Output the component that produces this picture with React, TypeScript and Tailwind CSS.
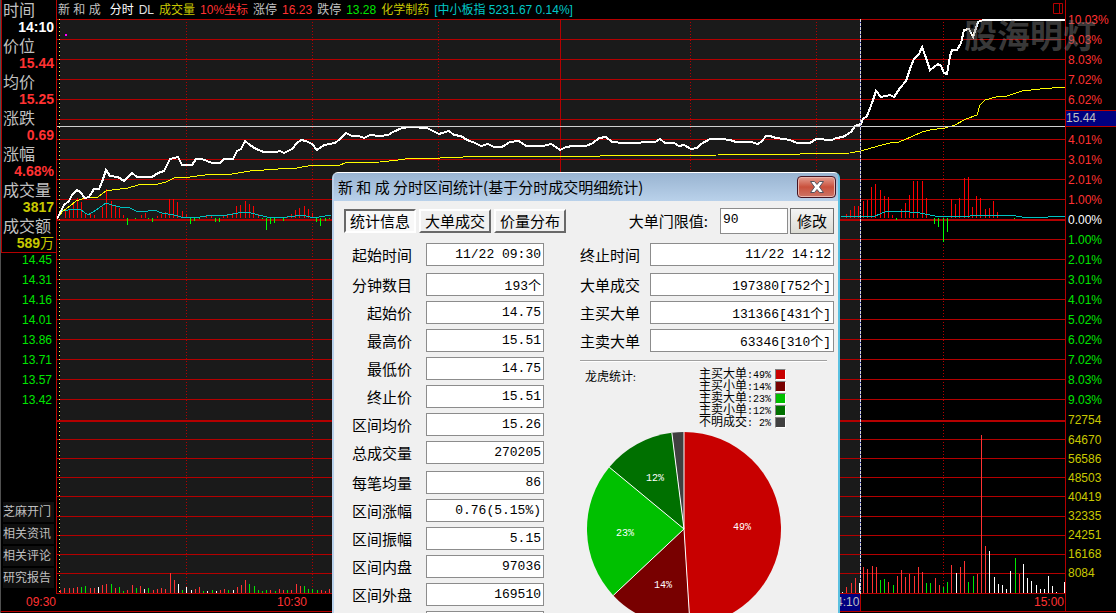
import React from 'react';

type BarColor = 'r' | 'g' | 'w';
type VolumeBar = [number, number, BarColor];

const BAR_FILL = { r: '#ff3232', g: '#00e600', w: '#ffffff' };

const HEADER_ITEMS = [
  { text: '新 和 成', className: 'text-[#c0c0c0] mr-1' },
  { text: '分时', className: 'text-white' },
  { text: 'DL', className: 'text-[#e0e0e0]' },
  { text: '成交量', className: 'text-[#c8c800]' },
  { text: '10%坐标', className: 'text-[#ff3232]' },
  { text: '涨停', className: 'text-[#c0c0c0]' },
  { text: '16.23', className: 'text-[#ff3232]' },
  { text: '跌停', className: 'text-[#c0c0c0]' },
  { text: '13.28', className: 'text-[#00e600]' },
  { text: '化学制药', className: 'text-[#c8c800]' },
  { text: '[中小板指 5231.67 0.14%]', className: 'text-[#00c8c8]' },
];

const QUOTES = [
  { label: '时间', value: '14:10', className: 'text-white' },
  { label: '价位', value: '15.44', className: 'text-[#ff3232]' },
  { label: '均价', value: '15.25', className: 'text-[#ff3232]' },
  { label: '涨跌', value: '0.69', className: 'text-[#ff3232]' },
  { label: '涨幅', value: '4.68%', className: 'text-[#ff3232]' },
  { label: '成交量', value: '3817', className: 'text-[#c8c800]' },
  { label: '成交额', value: '589', unit: '万', className: 'text-[#c8c800]' },
];

const LOW_PRICES = ['14.45', '14.31', '14.16', '14.01', '13.86', '13.71', '13.57', '13.42'];
const SIDE_BUTTONS = ['芝麻开门', '相关资讯', '相关评论', '研究报告'];

const UP_PERCENTS = ['10.03%', '9.03%', '8.03%', '7.02%', '6.02%', '', '4.01%', '3.01%', '2.01%', '1.00%'];
const DOWN_PERCENTS = ['1.00%', '2.01%', '3.01%', '4.01%', '5.02%', '6.02%', '7.02%', '8.03%', '9.03%'];
const VOLUMES = ['64670', '56586', '48503', '40419', '32335', '24251', '16168', '8084'];

const PRICE_GRID = [19, 39, 59, 79, 99, 119, 139, 159, 179, 199, 239, 259, 279, 299, 319, 339, 359, 379, 399];
const VOLUME_GRID = [439, 458, 477, 496, 516, 535, 554, 573, 593];
const TIME_GRID = [186, 312, 438, 690, 816, 943];

const PRICE_LINE =
  '57,219 60,213 64,205 69,201 72,195 77,190 80,192 85,198 89,197 94,189 99,189 102,182 106,170 110,176 118,177 124,181 132,173 137,177 152,177 158,173 164,171 170,159 178,157 182,165 192,165 196,159 202,159 212,163 220,163 224,159 233,159 237,151 241,149 245,141 250,145 256,149 264,152 276,152 280,151 284,153 292,149 297,143 301,140 306,141 312,144 317,150 324,145 335,143 340,139 346,133 352,136 359,136 364,138 370,135 380,136 388,135 393,132 402,128 410,127 427,128 439,134 449,131 454,135 461,136 467,140 475,143 481,146 488,144 494,147 502,147 510,142 519,141 526,146 543,146 551,144 556,147 560,150 566,147 573,146 586,146 593,143 599,138 606,137 612,142 624,143 635,143 648,142 655,142 660,139 665,143 674,143 679,146 684,145 691,149 697,148 701,144 710,139 722,139 730,140 736,142 751,142 758,144 762,141 766,136 770,136 776,138 784,139 790,140 797,143 810,143 816,139 832,140 836,138 843,137 851,132 855,126 861,124 863,119 867,116 872,103 876,91 881,97 890,95 894,97 900,88 906,81 911,66 914,59 919,54 922,47 926,58 930,70 934,67 938,64 941,66 944,73 947,74 950,56 952,50 957,50 961,43 964,30 969,29 973,37 978,22 983,20 1065,20';
const AVERAGE_LINE =
  '57,219 62,212 70,206 76,201 85,198 98,197 106,191 112,190 128,188 138,185 158,184 166,182 174,178 190,177 205,175 232,174 250,171 278,169 297,168 308,166 340,165 345,163 380,162 398,160 412,158 440,158 487,156 600,156 718,155 730,154 800,154 850,153 861,151 878,146 890,143 899,142 911,137 922,132 930,130 945,128 955,125 966,119 977,115 980,105 985,100 996,97 1007,96 1022,91 1040,89 1065,87';
const TREND_LEFT =
  '60,211 68,210 80,209 88,215 96,210 106,203 112,205 120,207 130,208 138,212 148,211 154,210 162,213 174,215 185,218 200,217 212,215 222,216 238,213 248,212 258,215 272,218 287,217 303,215 313,218 331,215';
const TREND_RIGHT =
  '841,217 860,216 875,216 880,214 887,211 900,211 920,213 935,216 965,217 975,215 1010,215 1022,217 1048,217 1065,216';

const STRENGTH_UP: [number, number][] = [
  [65, 211], [69, 210], [73, 202], [77, 198], [81, 202], [85, 213], [90, 214], [94, 215], [102, 207], [106, 189],
  [111, 201], [115, 205], [119, 208], [123, 215], [141, 215], [145, 213], [157, 216], [161, 214], [165, 212],
  [169, 199], [173, 199], [177, 202], [182, 211], [186, 214], [206, 216], [211, 215], [223, 216], [227, 215],
  [232, 213], [236, 206], [240, 205], [245, 201], [249, 204], [253, 206], [258, 214], [287, 216], [291, 214],
  [295, 210], [299, 208], [304, 206], [308, 209], [312, 213], [846, 214], [850, 210], [854, 206], [858, 206],
  [863, 201], [867, 200], [871, 187], [875, 184], [880, 190], [884, 196], [888, 197], [892, 215], [901, 209],
  [905, 203], [909, 195], [913, 181], [917, 181], [922, 181], [926, 198], [951, 199], [955, 204], [959, 198],
  [964, 178], [968, 177], [972, 207], [976, 196], [980, 198], [985, 209], [989, 208], [993, 201], [997, 212],
];
const STRENGTH_DOWN: [number, number][] = [
  [127, 225], [135, 219], [148, 219], [152, 222], [190, 224], [194, 221], [199, 219], [215, 222], [219, 222],
  [262, 219], [266, 230], [270, 224], [274, 223], [283, 221], [316, 222], [320, 226], [325, 221], [329, 219],
  [896, 220], [934, 224], [938, 227], [943, 242], [947, 232], [1014, 219],
];

const VOLUME_BARS: VolumeBar[] = [
  [60, 590, 'r'], [64, 588, 'r'], [69, 588, 'r'], [73, 588, 'r'], [77, 587, 'r'], [81, 587, 'g'], [85, 586, 'g'],
  [90, 588, 'r'], [94, 588, 'r'], [98, 587, 'w'], [102, 585, 'r'], [106, 584, 'r'], [111, 584, 'g'], [115, 588, 'r'],
  [119, 587, 'g'], [123, 591, 'g'], [127, 590, 'r'], [132, 585, 'r'], [136, 588, 'g'], [140, 586, 'r'],
  [144, 589, 'w'], [148, 588, 'g'], [153, 590, 'r'], [157, 589, 'r'], [161, 588, 'r'], [165, 589, 'r'],
  [170, 573, 'r'], [174, 580, 'r'], [178, 584, 'w'], [182, 590, 'g'], [186, 587, 'w'], [191, 590, 'w'],
  [195, 589, 'r'], [199, 587, 'r'], [203, 591, 'g'], [207, 591, 'w'], [212, 590, 'g'], [216, 591, 'w'],
  [220, 590, 'r'], [224, 589, 'r'], [228, 590, 'g'], [233, 590, 'w'], [237, 587, 'r'], [241, 585, 'r'],
  [245, 580, 'r'], [249, 584, 'g'], [254, 586, 'g'], [258, 590, 'g'], [262, 591, 'g'], [266, 590, 'g'],
  [270, 590, 'r'], [275, 591, 'g'], [279, 589, 'r'], [283, 590, 'r'], [287, 590, 'g'], [291, 590, 'r'],
  [296, 584, 'r'], [300, 586, 'r'], [304, 586, 'g'], [308, 589, 'g'], [312, 589, 'g'], [317, 590, 'g'],
  [321, 590, 'r'], [325, 591, 'r'], [329, 589, 'r'], [842, 592, 'w'], [846, 587, 'r'], [851, 583, 'r'],
  [855, 578, 'r'], [859, 583, 'w'], [863, 567, 'r'], [867, 569, 'r'], [872, 566, 'r'], [876, 567, 'r'],
  [880, 580, 'g'], [884, 579, 'g'], [888, 582, 'r'], [893, 585, 'g'], [897, 576, 'r'], [901, 570, 'r'],
  [905, 577, 'r'], [909, 574, 'r'], [914, 576, 'r'], [918, 567, 'r'], [922, 572, 'r'], [926, 583, 'g'],
  [930, 583, 'g'], [935, 578, 'r'], [939, 585, 'r'], [943, 587, 'g'], [947, 582, 'g'], [951, 565, 'r'],
  [956, 573, 'w'], [960, 567, 'r'], [964, 561, 'r'], [968, 582, 'g'], [973, 576, 'g'], [977, 574, 'r'],
  [981, 435, 'r'], [985, 546, 'r'], [989, 551, 'w'], [994, 577, 'w'], [998, 584, 'w'], [1002, 585, 'w'],
  [1006, 589, 'w'], [1010, 571, 'w'], [1015, 558, 'g'], [1019, 574, 'r'], [1023, 564, 'w'], [1027, 578, 'w'],
  [1031, 581, 'w'], [1036, 585, 'w'], [1040, 589, 'w'], [1044, 589, 'w'], [1048, 576, 'w'], [1052, 586, 'w'],
  [1056, 592, 'w'], [1064, 582, 'w'],
];

// groups are separated by a slightly larger gap
const LEFT_GROUPS = [
  [{ label: '起始时间', value: '11/22 09:30' }],
  [
    { label: '分钟数目', value: '193个' },
    { label: '起始价', value: '14.75' },
    { label: '最高价', value: '15.51' },
    { label: '最低价', value: '14.75' },
    { label: '终止价', value: '15.51' },
    { label: '区间均价', value: '15.26' },
    { label: '总成交量', value: '270205' },
  ],
  [
    { label: '每笔均量', value: '86' },
    { label: '区间涨幅', value: '0.76(5.15%)' },
    { label: '区间振幅', value: '5.15' },
    { label: '区间内盘', value: '97036' },
    { label: '区间外盘', value: '169510' },
  ],
];

const RIGHT_GROUPS = [
  [{ label: '终止时间', value: '11/22 14:12' }],
  [
    { label: '大单成交', value: '197380[752个]' },
    { label: '主买大单', value: '131366[431个]' },
    { label: '主卖大单', value: '63346[310个]' },
  ],
];

const LEGEND = [
  { name: '主买大单', percent: 49, className: 'bg-[#c80000]' },
  { name: '主买小单', percent: 14, className: 'bg-[#780000]' },
  { name: '主卖大单', percent: 23, className: 'bg-[#00c000]' },
  { name: '主卖小单', percent: 12, className: 'bg-[#007000]' },
  { name: '不明成交', percent: 2, className: 'bg-[#404040]' },
];

const PIE_SLICES = [
  { from: 0, to: 49, fill: '#c80000', label: '49%', x: 156, y: 99 },
  { from: 49, to: 63, fill: '#780000', label: '14%', x: 77, y: 157 },
  { from: 63, to: 86, fill: '#00c000', label: '23%', x: 39, y: 105 },
  { from: 86, to: 98, fill: '#007000', label: '12%', x: 69, y: 50 },
  { from: 98, to: 100, fill: '#404040', label: '', x: 0, y: 0 },
];

function piePoint(percent: number) {
  const angle = (percent / 100) * Math.PI * 2;
  return `${98 + 97 * Math.sin(angle)} ${98 - 97 * Math.cos(angle)}`;
}

function PieChart() {
  return (
    <svg
      width="196"
      height="196"
      viewBox="0 0 196 196"
      className="ml-1.5 [font-family:'Liberation_Mono',monospace]"
    >
      {PIE_SLICES.map((s) => (
        <path
          key={s.from}
          d={`M98 98 L${piePoint(s.from)} A97 97 0 0 1 ${piePoint(s.to)} Z`}
          fill={s.fill}
        />
      ))}
      {PIE_SLICES.map((s) => (
        <path key={s.from} d={`M98 98 L${piePoint(s.from)}`} stroke="#ffffff" />
      ))}
      {PIE_SLICES.map((s) => (
        <text key={s.from} x={s.x} y={s.y} textAnchor="middle" fill="#ffffff" className="text-[10px]">
          {s.label}
        </text>
      ))}
    </svg>
  );
}

function Field({ label, value, wide }: { label: string; value: string; wide?: boolean }) {
  return (
    <div className={wide ? 'flex items-center gap-2.5' : 'flex items-center justify-end gap-3.5'}>
      <label htmlFor={`field-${label}`} className="text-[15px] leading-5">
        {label}
      </label>
      <input
        id={`field-${label}`}
        readOnly
        value={value}
        className={
          "h-[23px] min-w-0 border border-[#8c8c8c] bg-white px-0.5 pb-px text-right text-[13px] outline-none [font-family:'Liberation_Mono','Noto_Sans_CJK_SC',monospace] " +
          (wide ? 'flex-1' : 'w-[118px]')
        }
      />
    </div>
  );
}

function FieldGroups({ groups, wide }: { groups: { label: string; value: string }[][]; wide?: boolean }) {
  return (
    <div className="flex flex-col gap-[7px]">
      {groups.map((group) => (
        <div key={group[0].label} className="flex flex-col gap-[5px]">
          {group.map((f) => (
            <Field key={f.label} label={f.label} value={f.value} wide={wide} />
          ))}
        </div>
      ))}
    </div>
  );
}

function StatsDialog() {
  return (
    <div
      role="dialog"
      aria-labelledby="stats-title"
      className="absolute left-[331px] top-[172px] flex w-[508px] flex-col rounded-t-md border-x-2 border-t border-l-[#b9d1ea] border-r-[#5cc0e0] border-t-white bg-[#f0f0f0] text-black [font-family:'Noto_Sans_CJK_SC',sans-serif]"
    >
      <div className="flex h-7 items-center justify-between rounded-t bg-gradient-to-b from-[#99b4d1] to-[#b9d1ea] pl-1 pr-0.5">
        <h2 id="stats-title" className="text-[15px]">
          新 和 成 分时区间统计(基于分时成交明细统计)
        </h2>
        <button
          aria-label="关闭"
          className="flex h-[22px] w-[39px] items-center justify-center rounded-sm border border-[#431422] bg-gradient-to-b from-[#e39d91] via-[#c9503c] to-[#cc7466] shadow-[inset_0_0_0_1px_#eab5ac]"
        >
          <svg width="16" height="14" viewBox="0 0 16 14">
            <path
              d="M1.500 1.500h4L8 4.500l2.500-3h4L10.500 7l4 5.500h-4L8 9.500l-2.500 3h-4l4-5.500z"
              fill="#ffffff"
              stroke="#52525e"
            />
          </svg>
        </button>
      </div>

      <div className="pl-2.5 pr-1 pt-[7px]">
        <div className="flex items-center">
          <div role="tablist" className="flex gap-[3px] text-[15px] leading-5">
            <button
              role="tab"
              aria-selected="true"
              className="h-6 w-[72px] border-2 border-b-white border-l-[#696969] border-r-white border-t-[#696969] bg-[#f8f8f8]"
            >
              统计信息
            </button>
            <button
              role="tab"
              className="h-6 w-[72px] border-2 border-b-[#696969] border-l-white border-r-[#696969] border-t-white"
            >
              大单成交
            </button>
            <button
              role="tab"
              className="h-6 w-[72px] border-2 border-b-[#696969] border-l-white border-r-[#696969] border-t-white"
            >
              价量分布
            </button>
          </div>
          <label htmlFor="threshold" className="ml-auto text-[15px] leading-5">
            大单门限值:
          </label>
          <input
            id="threshold"
            defaultValue="90"
            className="ml-3 h-[26px] w-[68px] border border-[#8c8c8c] bg-white px-0.5 pb-1 text-[13px] outline-none [font-family:'Liberation_Mono',monospace]"
          />
          <button className="ml-0.5 h-[26px] w-11 border border-[#707070] bg-gradient-to-b from-[#f4f4f4] to-[#dcdcd4] text-[15px] leading-5">
            修改
          </button>
        </div>

        <div className="mt-[9px] flex gap-9">
          <div className="w-[200px] shrink-0">
            <FieldGroups groups={LEFT_GROUPS} />
            <div className="ml-auto mt-[5px] h-[23px] w-[118px] border border-[#8c8c8c] bg-white" />
          </div>
          <div className="min-w-0 flex-1">
            <FieldGroups groups={RIGHT_GROUPS} wide />
            <div className="mr-[7px] mt-2 border-b border-t border-b-white border-t-[#a0a0a0]" />
            <div className="flex justify-between pl-[5px] pr-12 pt-1.5 text-[12px]">
              <span className="leading-4">
                龙虎统计<span className="text-[10px]">:</span>
              </span>
              <ul>
                {LEGEND.map((item) => (
                  <li key={item.name} className="flex h-3 items-center gap-1 leading-3">
                    <span className="whitespace-pre">
                      {item.name}
                      <span className="text-[10px] [font-family:'Liberation_Mono',monospace]">
                        :{String(item.percent).padStart(2, ' ')}%
                      </span>
                    </span>
                    <i
                      className={`h-[11px] w-[11px] border border-b-white border-l-[#808080] border-r-white border-t-[#808080] ${item.className}`}
                    />
                  </li>
                ))}
              </ul>
            </div>
            <div className="mt-[3px]">
              <PieChart />
            </div>
          </div>
        </div>
      </div>
    </div>
  );
}

function IntradayChart() {
  return (
    <svg
      viewBox="57 19 1008 575"
      preserveAspectRatio="none"
      shapeRendering="crispEdges"
      className="block h-[575px] w-full"
      fill="none"
    >
      <rect x="60" y="19" width="800" height="575" fill="#1a1a1a" />
      {[...PRICE_GRID, ...VOLUME_GRID].map((y) => (
        <rect key={y} x="57" y={y} width="1008" height="1" fill="#b40000" />
      ))}
      <rect x="57" y="219" width="1008" height="2" fill="#b40000" />
      <rect x="57" y="420" width="1008" height="2" fill="#b40000" />
      {TIME_GRID.map((x) => (
        <path key={x} d={`M${x + 0.5} 22V593`} stroke="#b40000" strokeDasharray="1 2" />
      ))}
      <rect x="560" y="19" width="1" height="574" fill="#b40000" />
      <path d="M59.500 19V593" stroke="#ffff60" strokeDasharray="1 3" />
      {STRENGTH_UP.map(([x, y]) => (
        <rect key={x} x={x} y={y} width="1" height={218 - y} fill="#ff0000" />
      ))}
      {STRENGTH_DOWN.map(([x, y]) => (
        <rect key={x} x={x} y="218" width="1" height={y - 218} fill="#00ff00" />
      ))}
      {VOLUME_BARS.map(([x, y, color]) => (
        <rect key={x} x={x} y={y} width="1" height={593 - y} fill={BAR_FILL[color]} />
      ))}
      <polyline points={TREND_LEFT} stroke="#00c0c0" />
      <polyline points={TREND_RIGHT} stroke="#00c0c0" />
      <polyline points={AVERAGE_LINE} stroke="#ffff00" />
      <polyline points={PRICE_LINE} stroke="#ffffff" strokeWidth="2" />
      <rect x="57" y="126" width="1008" height="1" fill="#d0d0d0" />
      <path d="M860.500 19V594" stroke="#2020a0" />
      <path d="M860.500 19V594" stroke="#d8d8d8" strokeDasharray="3 1" />
      <rect x="65" y="34" width="2" height="2" fill="#ff00ff" />
    </svg>
  );
}

export default function App() {
  return (
    <div className="relative h-screen overflow-hidden border-l border-[#505050] bg-black text-[12px] text-[#c0c0c0] [font-family:'Liberation_Sans','Noto_Sans_CJK_SC',sans-serif]">
      <div className="flex">
        <aside className="flex w-14 shrink-0 flex-col border-r border-[#b40000]">
          <dl className="border-b border-l border-[#b40000]">
            {QUOTES.map((q) => (
              <div key={q.label}>
                <dt className="h-[18px] pl-px text-[16px] leading-[18px] [font-family:'Noto_Sans_CJK_SC',sans-serif]">
                  {q.label}
                </dt>
                <dd className={`h-[18px] pr-0.5 text-right text-[14px] font-bold leading-[18px] ${q.className}`}>
                  {q.value}
                  {q.unit && <span className="font-normal">{q.unit}</span>}
                </dd>
              </div>
            ))}
          </dl>
          <div className="flex flex-col gap-1.5 pr-1 text-right leading-[14px] text-[#00e600]">
            {LOW_PRICES.map((p) => (
              <span key={p}>{p}</span>
            ))}
          </div>
          <nav className="mt-auto flex flex-col gap-0.5 pb-1.5 pl-0.5 pr-0.5">
            {SIDE_BUTTONS.map((name) => (
              <button key={name} className="h-5 whitespace-nowrap bg-[#0f0f0f] text-left leading-5">
                {name}
              </button>
            ))}
          </nav>
        </aside>

        <main className="min-w-0 flex-1">
          <header className="flex h-[19px] items-center gap-[5px] whitespace-nowrap pl-px pr-0.5 leading-[18px]">
            {HEADER_ITEMS.map((item) => (
              <span key={item.text} className={item.className}>
                {item.text}
              </span>
            ))}
            <svg width="10" height="11" viewBox="0 0 10 11" fill="none" stroke="#b40000" className="mb-0.5 ml-auto">
              <path d="M.5.5h9v10h-9zM6.500.5v10" />
            </svg>
          </header>
          <IntradayChart />
        </main>

        <aside className="w-[51px] shrink-0 border-l border-[#b40000] pt-2.5 leading-5">
          {UP_PERCENTS.map((p) =>
            p ? (
              <div key={p} className="h-5 pl-0.5 text-[#ff3232]">
                {p}
              </div>
            ) : (
              <div key="price" className="mb-[3px] h-[17px] border-y border-[#b40000] bg-[#000080] leading-[15px]">
                15.44
              </div>
            )
          )}
          <div className="h-5 pl-0.5 text-white">0.00%</div>
          {DOWN_PERCENTS.map((p) => (
            <div key={p} className="h-5 pl-0.5 text-[#00e600]">
              {p}
            </div>
          ))}
          <div className="pl-0.5 text-[#c8c800]">
            <div className="h-5">72754</div>
            {VOLUMES.map((v) => (
              <div key={v} className="h-[19px]">
                {v}
              </div>
            ))}
          </div>
        </aside>
      </div>

      <footer className="flex border-b border-[#b40000] leading-[17px] text-[#ff3232]">
        <span className="w-14 shrink-0 pr-px text-right">09:30</span>
        <div className="relative flex h-[17px] flex-1 justify-between pl-[220px] pr-px">
          <span>10:30</span>
          <span className="absolute right-[20.200%] h-full border-r border-[#b40000] bg-[#000080] pr-px text-[#c0c0c0]">
            14:10
          </span>
          <span>15:00</span>
        </div>
        <span className="w-[51px] shrink-0 border-l border-[#b40000]" />
      </footer>

      <div className="pointer-events-none absolute right-5 top-[17px] text-[33px] font-bold leading-10 text-[#808080]/45">
        股海明灯
      </div>

      <StatsDialog />
    </div>
  );
}
